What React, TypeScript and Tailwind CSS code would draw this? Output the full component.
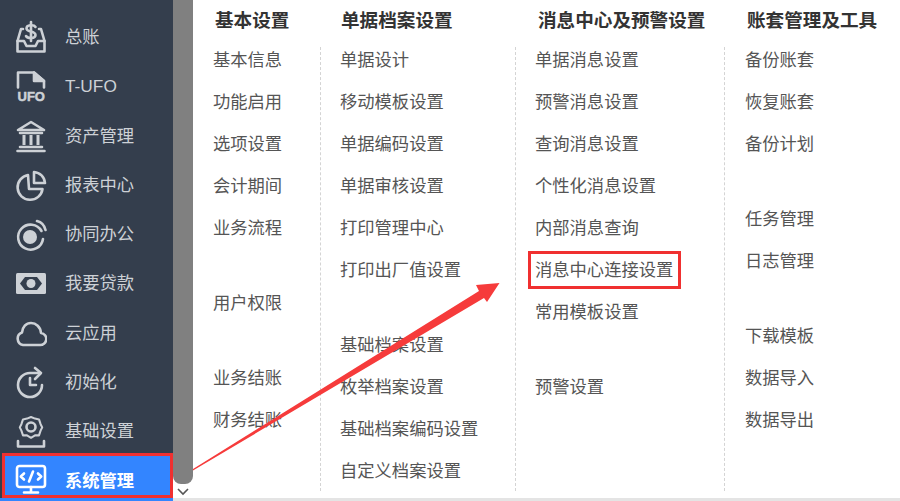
import React from "react";

const s = { fill: "none", stroke: "currentColor", strokeWidth: 2.6, strokeLinecap: "round", strokeLinejoin: "round" } as const;

function Ico({ children }: { children: React.ReactNode }) {
  return <svg width="32" height="36" viewBox="0 0 32 36" className="shrink-0">{children}</svg>;
}

const icons: Record<string, React.ReactNode> = {
  ledger: (
    <Ico>
      <g {...s}>
        <path d="M8 9 H6 L2.5 21 V31.5 H29.5 V21 L26 9 H24" />
        <path d="M2.5 21 H9 L11.5 26 H20.5 L23 21 H29.5" />
        <path d="M20.5 7 C19 4.5 11.5 4.5 11.5 8.5 C11.5 12.5 20.5 10.5 20.5 15 C20.5 19 12.5 18.5 11 16" />
        <path d="M16 2 V21" />
      </g>
    </Ico>
  ),
  ufo: (
    <Ico>
      <g {...s}>
        <path d="M3 18.5 V3.5 H19 L29 12 V18.5" />
        <path d="M19 3.5 V12 H29 Z" fill="currentColor" />
      </g>
      <text x="2.5" y="32" fill="currentColor" stroke="currentColor" strokeWidth="0.5" fontSize="13" fontWeight="700" fontFamily="'Liberation Sans', sans-serif">UFO</text>
    </Ico>
  ),
  bank: (
    <Ico>
      <g {...s}>
        <path d="M3 12 L16 4 L29 12 Z" />
        <path d="M9 17 V27 M16 17 V27 M23 17 V27" strokeWidth="3" strokeLinecap="butt" />
        <path d="M5 15 H27 M5 29 H27 M2.5 33 H29.5" />
      </g>
    </Ico>
  ),
  report: (
    <Ico>
      <g {...s}>
        <path d="M13 7 A12.5 12.5 0 1 0 27.5 21 H14 Z" />
        <path d="M19 4 C25 4.5 29.5 9 30 15 H19 Z" />
      </g>
    </Ico>
  ),
  collab: (
    <Ico>
      <g {...s}>
        <path d="M26.5 14 A12.5 12.5 0 1 0 28 22" />
        <path d="M22 4 C26 5 29.5 8.5 30.5 13" />
      </g>
      <circle cx="15" cy="20" r="7" fill="currentColor" />
    </Ico>
  ),
  money: (
    <Ico>
      <rect x="1" y="7" width="30" height="21" rx="1.5" fill="currentColor" />
      <path d="M5 17.5 L10 11 H22 L27 17.5 L22 24 H10 Z" fill="#343e4d" />
      <circle cx="16" cy="17.5" r="4.5" fill="currentColor" />
    </Ico>
  ),
  cloud: (
    <Ico>
      <path {...s} d="M8 30 H24.5 A6 6 0 0 0 26 18 C25.5 12 21 8 16 8 C11 8 7.5 12 7 17.5 A6.5 6.5 0 0 0 8 30 Z" />
    </Ico>
  ),
  init: (
    <Ico>
      <g {...s}>
        <path d="M25 8 H15 A12 12 0 1 0 27 20" />
        <path d="M20 3 L26 8 L20 14" />
        <path d="M15 13 V20 H21" />
      </g>
    </Ico>
  ),
  gear: (
    <Ico>
      <g {...s}>
        <path d="M16 2 L21 4 L26 5 L28 11 L30 15 L28 19 L26 25 L21 25 L16 28 L11 25 L6 25 L4 19 L2 15 L4 11 L6 5 L11 4 Z" transform="translate(3.2 1.4) scale(0.8)" />
        <circle cx="16" cy="13" r="4.5" />
        <path d="M3 27 V32.5 H29 V27" />
      </g>
    </Ico>
  ),
  code: (
    <Ico>
      <g {...s} strokeWidth="2.6">
        <rect x="2" y="3" width="28" height="21" rx="2.5" />
        <path d="M9 10.5 L5.8 13.5 L9 16.5 M23 10.5 L26.2 13.5 L23 16.5 M18 8.5 L14 18.5" />
        <path d="M16 24 V29 M9 29.5 H23" />
      </g>
    </Ico>
  ),
};

const nav = [
  ["ledger", "总账"],
  ["ufo", "T-UFO"],
  ["bank", "资产管理"],
  ["report", "报表中心"],
  ["collab", "协同办公"],
  ["money", "我要贷款"],
  ["cloud", "云应用"],
  ["init", "初始化"],
  ["gear", "基础设置"],
];

const cols: { title: string; w: string; tx: string; px: string; groups: string[][] }[] = [
  { title: "基本设置", w: "w-[127px]", tx: "pl-[22px]", px: "pl-[20px]", groups: [["基本信息", "功能启用", "选项设置", "会计期间", "业务流程"], ["用户权限"], ["业务结账", "财务结账"]] },
  { title: "单据档案设置", w: "w-[195px]", tx: "pl-[21px]", px: "pl-[19px] border-l border-dashed border-[#d4d4d4]", groups: [["单据设计", "移动模板设置", "单据编码设置", "单据审核设置", "打印管理中心", "打印出厂值设置"], ["基础档案设置", "枚举档案设置", "基础档案编码设置", "自定义档案设置"]] },
  { title: "消息中心及预警设置", w: "w-[209px]", tx: "pl-[23px]", px: "pl-[19px] border-l border-dashed border-[#d4d4d4]", groups: [["单据消息设置", "预警消息设置", "查询消息设置", "个性化消息设置", "内部消息查询", "消息中心连接设置", "常用模板设置"], ["预警设置"]] },
  { title: "账套管理及工具", w: "w-[176px]", tx: "pl-[23px]", px: "pl-[20px] border-l border-dashed border-[#d4d4d4]", groups: [["备份账套", "恢复账套", "备份计划"], ["任务管理", "日志管理"], ["下载模板", "数据导入", "数据导出"]] },
];

export default function App() {
  return (
    <div className="relative w-[900px] h-[501px] overflow-hidden bg-white flex flex-col font-['Liberation_Sans','Noto_Sans_CJK_SC',sans-serif]">
      <div className="flex h-[498px]">
        <aside className="w-[173px] bg-[#343e4d] pt-[13px] flex flex-col shrink-0 text-[#cdd1d6]">
          {nav.map(([ic, label]) => (
            <div key={label} className="h-[49.3px] flex items-center pl-[15px] gap-[18px] shrink-0">
              {icons[ic]}
              <span className="text-[17.3px] leading-none">{label}</span>
            </div>
          ))}
          <div className="mt-[-3.7px] ml-[2px] h-[45px] pt-[12px] bg-[#3385ff] border-[3px] border-[#f03030] flex items-center pl-[10px] gap-[18px] text-white">
            {icons.code}
            <span className="text-[17.3px] font-bold leading-none">系统管理</span>
          </div>
        </aside>
        <div className="w-[20px] shrink-0 bg-white flex flex-col items-center">
          <div className="w-full h-[484px] bg-[#808080] rounded-b-[8px]" />
          <svg width="12" height="8" viewBox="0 0 12 8" className="mt-[4px]">
            <path d="M1 1 L6 6 L11 1" fill="none" stroke="#555" strokeWidth="1.6" />
          </svg>
        </div>
        <main className="flex flex-1">
          {cols.map((c) => (
            <section key={c.title} className={`${c.w} flex flex-col shrink-0`}>
              <h2 className={`h-[47px] ${c.tx} pt-[8px] text-[18.6px] leading-[26px] font-bold text-[#333] whitespace-nowrap`}>{c.title}</h2>
              <div className={`flex-1 mb-[7px] ${c.px} flex flex-col gap-[49px]`}>
                {c.groups.map((g, i) => (
                  <ul key={i} className="flex flex-col gap-[16px]">
                    {g.map((t) => (
                      <li key={t} className="relative h-[26px] leading-[26px] text-[17.3px] text-[#555] whitespace-nowrap">
                        {t}
                        {t === "消息中心连接设置" && (
                          <span className="absolute left-[-7px] top-[-6px] w-[153px] h-[38px] border-[3px] border-[#f03030]" />
                        )}
                      </li>
                    ))}
                  </ul>
                ))}
              </div>
            </section>
          ))}
        </main>
      </div>
      <div className="h-[3px] bg-[#e4e4e4] flex">
        <div className="w-[173px] bg-[#3385ff]" />
      </div>
      <svg width="900" height="501" viewBox="0 0 900 501" className="absolute inset-0 pointer-events-none">
        <path d="M193 469 L479 291 L476 285 L499.5 283 L487 302 L484 298 L193 470.5 Z" fill="#f63b3b" />
      </svg>
    </div>
  );
}
